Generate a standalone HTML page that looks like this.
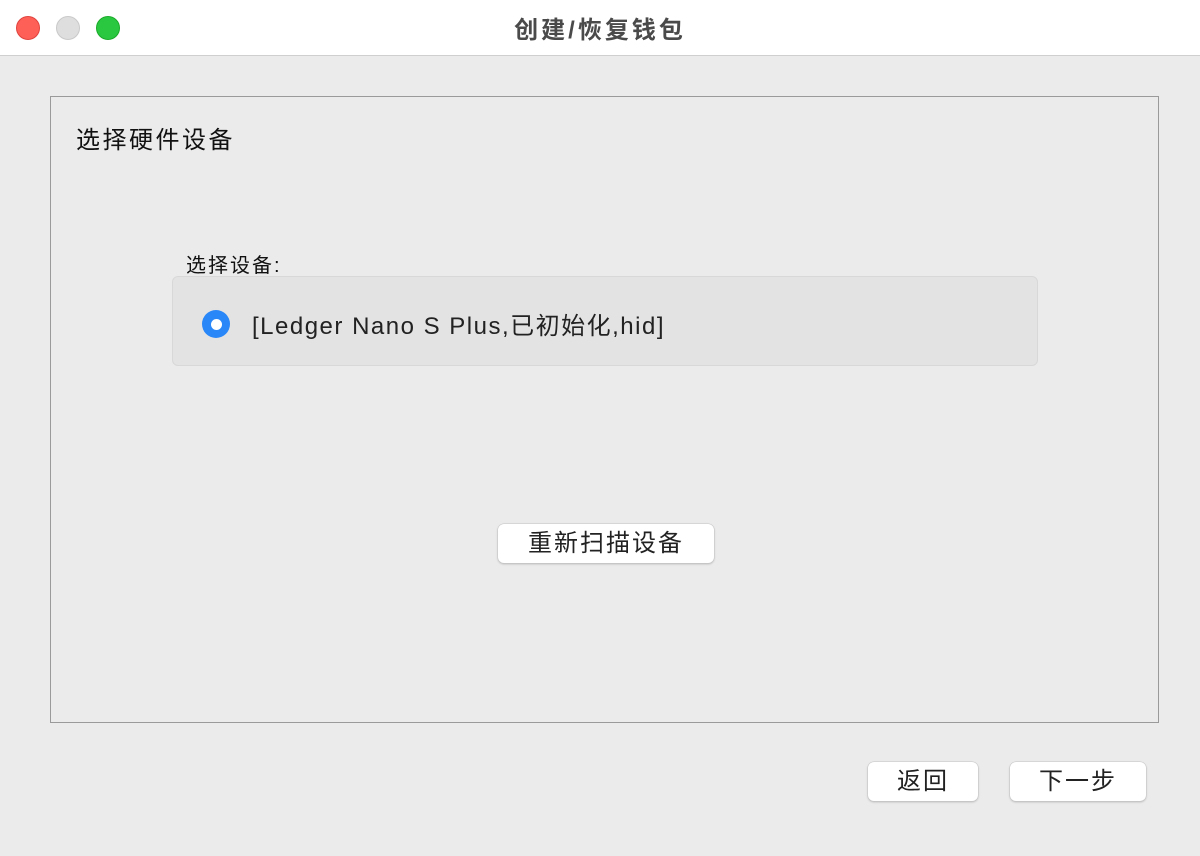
<!DOCTYPE html>
<html><head><meta charset="utf-8"><style>
*{margin:0;padding:0;box-sizing:border-box}
body{width:1200px;height:856px;background:#ebebeb;font-family:"Liberation Sans","Noto Sans CJK SC",sans-serif;position:relative;overflow:hidden;color:#1d1d1d}
.tb{position:absolute;left:0;top:0;width:1200px;height:56px;background:#fff;border-bottom:1px solid #cfcfcf}
.dot{position:absolute;top:16px;width:24px;height:24px;border-radius:50%}
.title{position:absolute;top:10px;left:0;width:1200px;text-align:center;font-size:24px;letter-spacing:3px;font-weight:bold;color:#4a4a4a}
.box{position:absolute;left:50px;top:96px;width:1109px;height:627px;border:1px solid #9a9a9a}
.h{position:absolute;left:76px;top:120px;font-size:24px;letter-spacing:2.5px;color:#111}
.lbl{position:absolute;left:186px;top:249px;font-size:20px;letter-spacing:2px;color:#111}
.list{position:absolute;left:172px;top:276px;width:866px;height:90px;background:#e3e3e3;border:1px solid #d8d8d8;border-radius:6px}
.radio{position:absolute;left:202px;top:310px;width:28px;height:28px;border-radius:50%;background:#2a87f7}
.radio:after{content:"";position:absolute;left:8.5px;top:8.5px;width:11px;height:11px;border-radius:50%;background:#fff}
.item{position:absolute;left:252px;top:306px;font-size:24px;letter-spacing:1.5px;color:#222}
.btn{position:absolute;background:#fff;border-radius:6px;box-shadow:0 0 0 0.5px #c4c4c4,0 1px 2px rgba(0,0,0,.25);text-align:center;font-size:24px;letter-spacing:2px;color:#222}
</style></head><body>
<div class="tb">
<div class="dot" style="left:16px;background:#fe5f57;border:1px solid #e0443e"></div>
<div class="dot" style="left:56px;background:#dedede;border:1px solid #c9c9c9"></div>
<div class="dot" style="left:96px;background:#2ac840;border:1px solid #1aab29"></div>
<div class="title">创建/恢复钱包</div>
</div>
<div class="box"></div>
<div class="h">选择硬件设备</div>
<div class="lbl">选择设备:</div>
<div class="list"></div>
<div class="radio"></div>
<div class="item">[Ledger Nano S Plus,已初始化,hid]</div>
<div class="btn" style="left:498px;top:524px;width:216px;height:39px;line-height:39px">重新扫描设备</div>
<div class="btn" style="left:868px;top:762px;width:110px;height:39px;line-height:39px">返回</div>
<div class="btn" style="left:1010px;top:762px;width:136px;height:39px;line-height:39px">下一步</div>
</body></html>
